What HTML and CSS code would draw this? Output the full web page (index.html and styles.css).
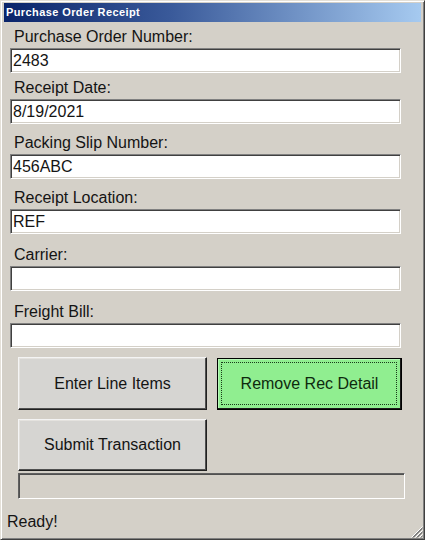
FILE: index.html
```html
<!DOCTYPE html>
<html>
<head>
<meta charset="utf-8">
<title>Purchase Order Receipt</title>
<link rel="stylesheet" href="styles.css">
</head>
<body>
<div class="window">
  <div class="titlebar">Purchase Order Receipt</div>
  <div class="form">
    <div class="field">
      <div class="label">Purchase Order Number:</div>
      <input class="textbox" type="text" value="2483">
    </div>
    <div class="field field-2">
      <div class="label">Receipt Date:</div>
      <input class="textbox" type="text" value="8/19/2021">
    </div>
    <div class="field field-3">
      <div class="label">Packing Slip Number:</div>
      <input class="textbox" type="text" value="456ABC">
    </div>
    <div class="field field-4">
      <div class="label">Receipt Location:</div>
      <input class="textbox" type="text" value="REF">
    </div>
    <div class="field field-5">
      <div class="label">Carrier:</div>
      <input class="textbox" type="text" value="">
    </div>
    <div class="field field-6">
      <div class="label">Freight Bill:</div>
      <input class="textbox" type="text" value="">
    </div>
    <div class="buttons">
      <button class="btn" type="button">Enter Line Items</button>
      <button class="btn btn-green" type="button">Remove Rec Detail</button>
      <button class="btn" type="button">Submit Transaction</button>
    </div>
    <div class="progress"></div>
  </div>
  <div class="status">Ready!</div>
  <svg class="grip" width="13" height="13" viewBox="0 0 13 13">
    <g stroke-width="1">
      <line x1="12.5" y1="1.5" x2="1.5" y2="12.5" stroke="#ffffff"/>
      <line x1="12.5" y1="2.5" x2="2.5" y2="12.5" stroke="#808080"/>
      <line x1="12.5" y1="3.5" x2="3.5" y2="12.5" stroke="#808080"/>
      <line x1="12.5" y1="5.5" x2="5.5" y2="12.5" stroke="#ffffff"/>
      <line x1="12.5" y1="6.5" x2="6.5" y2="12.5" stroke="#808080"/>
      <line x1="12.5" y1="7.5" x2="7.5" y2="12.5" stroke="#808080"/>
      <line x1="12.5" y1="9.5" x2="9.5" y2="12.5" stroke="#ffffff"/>
      <line x1="12.5" y1="10.5" x2="10.5" y2="12.5" stroke="#808080"/>
      <line x1="12.5" y1="11.5" x2="11.5" y2="12.5" stroke="#808080"/>
    </g>
  </svg>
</div>
</body>
</html>
```

FILE: styles.css
```css
html, body {
  margin: 0;
  padding: 0;
  background: #d4d0c8;
}

.window {
  position: relative;
  box-sizing: border-box;
  width: 425px;
  height: 540px;
  background: #d4d0c8;
  border: 1px solid;
  border-color: #e4e0d8 #404040 #404040 #e4e0d8;
  box-shadow: inset 1px 1px 0 #ffffff, inset -1px -1px 0 #808080;
  padding: 2px 3px 0 3px;
  font-family: "Liberation Sans", Arial, sans-serif;
  color: #141414;
}

.titlebar {
  height: 19px;
  line-height: 19px;
  padding-left: 2px;
  background: linear-gradient(to right, #0a246a 0%, #3a5a9a 40%, #a6caf0 100%);
  color: #ffffff;
  font-weight: bold;
  font-size: 11px;
  letter-spacing: 0.4px;
}

.form {
  display: flex;
  flex-direction: column;
  padding: 6px 0 0 6px;
}

.field {
  display: flex;
  flex-direction: column;
}

.field-2 { margin-top: 6px; }
.field-3 { margin-top: 10px; }
.field-4 { margin-top: 10px; }
.field-5 { margin-top: 12px; }
.field-6 { margin-top: 12px; }

.label {
  font-size: 16px;
  line-height: 18px;
  height: 18px;
  padding-left: 4px;
  margin-bottom: 2px;
}

.textbox {
  box-sizing: border-box;
  width: 391px;
  height: 25px;
  margin: 0;
  padding: 0 2px;
  background: #ffffff;
  border: 1px solid;
  border-color: #808080 #ffffff #ffffff #808080;
  box-shadow: inset 1px 1px 0 #404040, inset -1px -1px 0 #d4d0c8;
  font-family: "Liberation Sans", Arial, sans-serif;
  font-size: 16px;
  color: #141414;
  outline: none;
}

.buttons {
  display: grid;
  grid-template-columns: 189px 185px;
  grid-template-rows: 53px 52px;
  column-gap: 10px;
  row-gap: 9px;
  margin: 9px 0 0 8px;
}

.btn {
  box-sizing: border-box;
  margin: 0;
  padding: 0;
  background: #d6d5d2;
  border: 1px solid;
  border-color: #f4f4f4 #202020 #202020 #f4f4f4;
  box-shadow: inset -1px -1px 0 #505050, inset 1px 1px 0 #e4e2de;
  font-family: "Liberation Sans", Arial, sans-serif;
  font-size: 16px;
  color: #141414;
  text-align: center;
}

.btn-green {
  position: relative;
  margin-top: 1px;
  background: #90ee90;
  border-color: #000000;
  box-shadow: inset -1px -1px 0 #1a1a1a, inset 1px 1px 0 #b8f8b8;
  color: #0e2a0e;
}

.btn-green::after {
  content: "";
  position: absolute;
  left: 3px;
  top: 3px;
  right: 4px;
  bottom: 4px;
  border: 1px dotted #1a3a1a;
}

.progress {
  box-sizing: border-box;
  width: 387px;
  height: 26px;
  margin: 2px 0 0 8px;
  background: #d4d0c8;
  border: 1px solid;
  border-color: #606060 #ffffff #ffffff #606060;
  box-shadow: inset 1px 1px 0 #505050;
}

.status {
  margin-top: 14px;
  padding-left: 3px;
  font-size: 16px;
  line-height: 18px;
}

.grip {
  position: absolute;
  right: 1px;
  bottom: 1px;
  display: block;
}
```
